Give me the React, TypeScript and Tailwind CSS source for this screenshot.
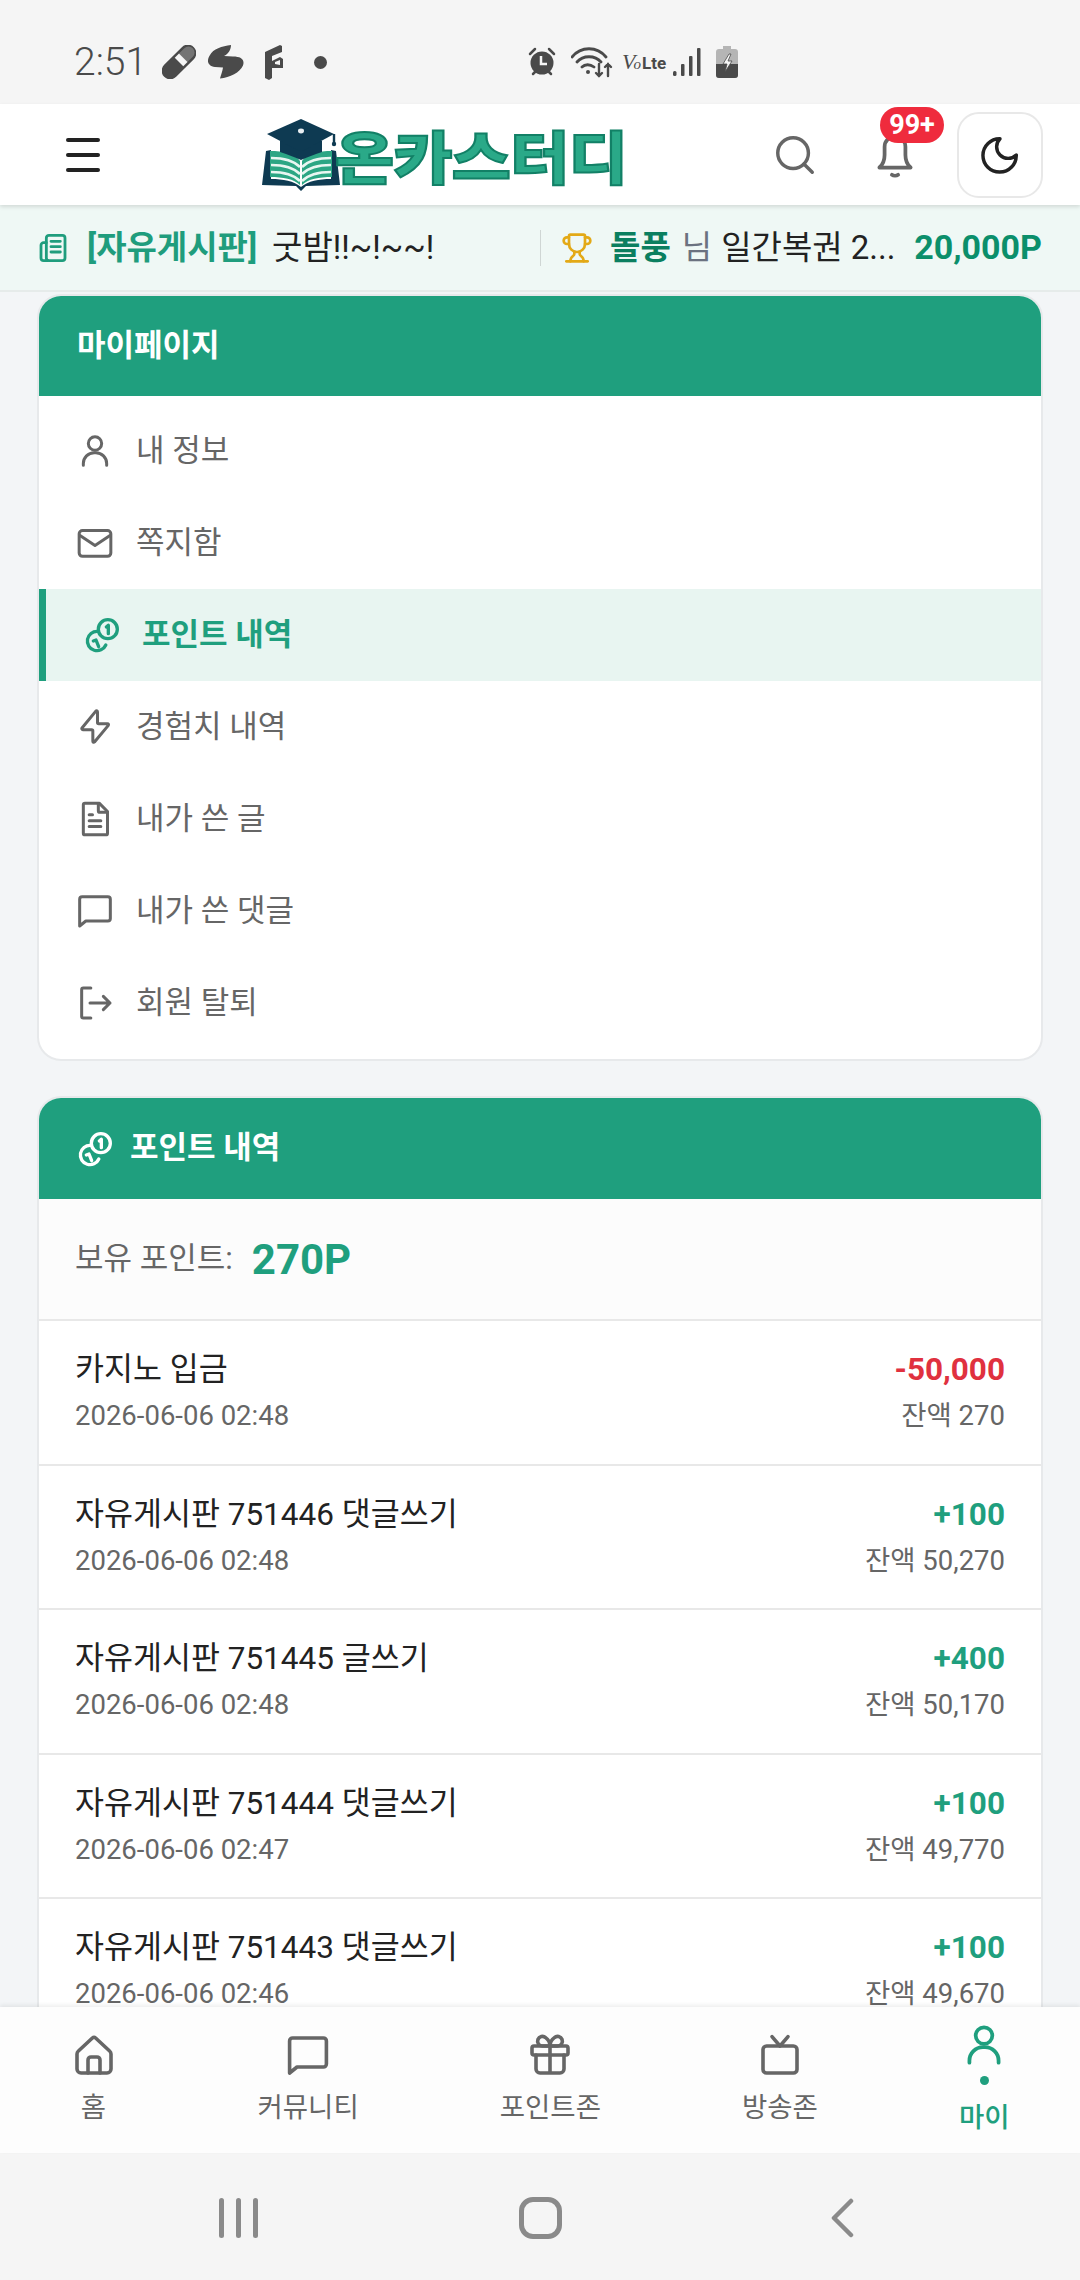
import React from "react";
import { Search, Trophy } from "lucide-react";

const Ico = ({ className, children, sw = 1.8 }: { className: string; children: React.ReactNode; sw?: number }) => (
  <svg viewBox="0 0 24 24" fill="none" stroke="currentColor" strokeWidth={sw} strokeLinecap="round" strokeLinejoin="round" className={className}>
    {children}
  </svg>
);

const UserIcon = ({ className }: { className: string }) => (
  <Ico className={className}>
    <circle cx="12" cy="7.5" r="4" />
    <path d="M5 20.5v-1a6.5 6.5 0 0 1 6.5-6.5h1a6.5 6.5 0 0 1 6.5 6.5v1" />
  </Ico>
);
const MailIcon = ({ className }: { className: string }) => (
  <Ico className={className}>
    <rect x="2.5" y="4.5" width="19" height="15.5" rx="2" />
    <path d="M3 7.5l9 6 9-6" />
  </Ico>
);
const CoinsIcon = ({ className }: { className: string }) => (
  <Ico className={className} sw={2}>
    <circle cx="15.5" cy="8.5" r="5.7" />
    <path d="M14.6 7.2l1.2-1v5" />
    <path d="M9.3 9.8a5.8 5.8 0 1 0 5 8.2" />
    <path d="M6.8 15.6l1.6-.6 1.6 4" />
  </Ico>
);
const BoltIcon = ({ className }: { className: string }) => (
  <Ico className={className}>
    <path d="M4.2 12.6l8.3-10.1c.4-.4 1-.1 1 .5v6.3c0 .4.3.7.7.7h5.3c.5 0 .8.6.5 1l-8.3 10c-.4.4-1 .2-1-.4v-6.3c0-.4-.3-.7-.7-.7H4.7c-.5 0-.8-.6-.5-1z" />
  </Ico>
);
const PageIcon = ({ className }: { className: string }) => (
  <Ico className={className}>
    <path d="M6 2.5h8.5l5 5v13a1 1 0 0 1-1 1H6a1 1 0 0 1-1-1v-17a1 1 0 0 1 1-1z" />
    <path d="M14 2.8V7a1 1 0 0 0 1 1h4.2" />
    <path d="M8.5 9.5h2M8.5 13h7M8.5 16.5h7" />
  </Ico>
);
const ChatIcon = ({ className }: { className: string }) => (
  <Ico className={className}>
    <path d="M2.8 21V5a1.5 1.5 0 0 1 1.5-1.5h15.4A1.5 1.5 0 0 1 21.2 5v11.5a1.5 1.5 0 0 1-1.5 1.5H6.5z" />
  </Ico>
);
const ExitIcon = ({ className }: { className: string }) => (
  <Ico className={className}>
    <path d="M9.5 3H5a1 1 0 0 0-1 1v16a1 1 0 0 0 1 1h4.5" />
    <path d="M9 12h12M17 8l4 4-4 4" />
  </Ico>
);
const HomeIcon = ({ className }: { className: string }) => (
  <Ico className={className}>
    <path d="M3.5 11.5a2 2 0 0 1 .7-1.5l7-6.5a1.2 1.2 0 0 1 1.6 0l7 6.5a2 2 0 0 1 .7 1.5V19a2 2 0 0 1-2 2h-13a2 2 0 0 1-2-2z" />
    <path d="M9 21v-6.5a1.5 1.5 0 0 1 1.5-1.5h3a1.5 1.5 0 0 1 1.5 1.5V21" />
  </Ico>
);
const GiftIcon = ({ className }: { className: string }) => (
  <Ico className={className}>
    <rect x="3" y="7.5" width="18" height="4.5" rx="1" />
    <path d="M5 12v7a2 2 0 0 0 2 2h10a2 2 0 0 0 2-2v-7M12 7.5V21" />
    <path d="M12 7.5H8.2a2.4 2.4 0 1 1 1.6-4.2c1.4 1 2.2 2.6 2.2 4.2zM12 7.5h3.8a2.4 2.4 0 1 0-1.6-4.2C12.8 4.3 12 5.9 12 7.5z" />
  </Ico>
);
const TvIcon = ({ className }: { className: string }) => (
  <Ico className={className}>
    <rect x="3.5" y="7.5" width="17" height="13.5" rx="1.8" />
    <path d="M8 2.8l4 4.7 4-4.7" />
  </Ico>
);

const menu = [
  { label: "내 정보", icon: UserIcon },
  { label: "쪽지함", icon: MailIcon },
  { label: "포인트 내역", icon: CoinsIcon, active: true },
  { label: "경험치 내역", icon: BoltIcon },
  { label: "내가 쓴 글", icon: PageIcon },
  { label: "내가 쓴 댓글", icon: ChatIcon },
  { label: "회원 탈퇴", icon: ExitIcon },
];

const history = [
  { title: "카지노 입금", date: "2026-06-06 02:48", amount: "-50,000", balance: "잔액 270", minus: true },
  { title: "자유게시판 751446 댓글쓰기", date: "2026-06-06 02:48", amount: "+100", balance: "잔액 50,270" },
  { title: "자유게시판 751445 글쓰기", date: "2026-06-06 02:48", amount: "+400", balance: "잔액 50,170" },
  { title: "자유게시판 751444 댓글쓰기", date: "2026-06-06 02:47", amount: "+100", balance: "잔액 49,770" },
  { title: "자유게시판 751443 댓글쓰기", date: "2026-06-06 02:46", amount: "+100", balance: "잔액 49,670" },
];

const StatusBar = () => (
  <div className="h-[104px] shrink-0 bg-[#f5f5f5] flex items-center pt-[20px] pl-[74px] text-[#4a4a4a]">
    <span className="text-[39px] leading-none font-light w-[88px]">2:51</span>
    <svg viewBox="0 0 34 34" className="w-[34px] h-[34px] fill-current">
      <g transform="rotate(-45 17 17)">
        <rect x="-4" y="8.5" width="42" height="17" rx="8.5" />
        <rect x="17" y="11" width="6" height="12" fill="#f5f5f5" />
        <path d="M23 11h7.5a6 6 0 0 1 0 12H23z" fill="#f5f5f5" opacity="0.25" />
      </g>
    </svg>
    <svg viewBox="0 0 38 36" className="w-[38px] h-[36px] ml-[11px] fill-current">
      <path d="M24 1C15 2 6 5 3 11-1 17 1 22 8 23l8 .5c-.5 4-2 7-3 11 10-1 20-6 23-13 2-6-2-9-10-9l-9-.5C21 10 24 6 24 1z" />
    </svg>
    <svg viewBox="0 0 20 36" className="w-[20px] h-[36px] ml-[19px] fill-current">
      <path d="M1 8l15-7 2 1v6L8 12v5l8-4 3 2v9L8 24v10l-3 2-4-2z" />
      <path d="M11 18l5-2v5l-5-1z" fill="#f5f5f5" />
    </svg>
    <span className="w-[13px] h-[13px] rounded-full bg-current ml-[30px]" />
    <svg viewBox="0 0 28 30" className="w-[28px] h-[30px] ml-[201px] fill-current">
      <circle cx="14" cy="16" r="11.5" />
      <path d="M2 7l5-5M26 7l-5-5M5 27l3-3M23 27l-3-3" stroke="currentColor" strokeWidth="2.5" strokeLinecap="round" />
      <path d="M13 9v8h6" fill="none" stroke="#f5f5f5" strokeWidth="2.5" />
    </svg>
    <svg viewBox="0 0 42 32" className="w-[42px] h-[32px] ml-[15px]" fill="none" stroke="currentColor" strokeWidth="2.8" strokeLinecap="round">
      <path d="M1 11C10 0 26 0 35 11M6 16c6-7 18-7 24 0M11 21c3-3 8-3 12 0" />
      <circle cx="17" cy="26" r="2" fill="currentColor" stroke="none" />
      <path d="M28 18v12M25 27l3 3 3-3M37 30V18M34 21l3-3 3 3" strokeWidth="2.4" />
    </svg>
    <span className="ml-[9px] w-[44px] flex items-baseline leading-none whitespace-nowrap">
      <span className="text-[22px] italic font-['Liberation_Serif',serif] tracking-[-2px]">V</span>
      <span className="text-[15px] italic font-['Liberation_Serif',serif]">o</span>
      <span className="text-[17px] font-bold font-['Roboto',sans-serif] ml-[1px]">Lte</span>
    </span>
    <svg viewBox="0 0 28 30" className="w-[28px] h-[30px] ml-[7px] fill-current">
      <rect x="0" y="24" width="3.5" height="5" rx="1.5" />
      <rect x="8" y="17" width="3.5" height="12" rx="1" />
      <rect x="16" y="9" width="3.5" height="20" rx="1" />
      <rect x="24" y="1" width="3.5" height="28" rx="1" />
    </svg>
    <svg viewBox="0 0 22 32" className="w-[22px] h-[32px] ml-[15px]">
      <path d="M7 0h8v3h4a3 3 0 0 1 3 3v23a3 3 0 0 1-3 3H3a3 3 0 0 1-3-3V6a3 3 0 0 1 3-3h4z" fill="#b5b5b5" />
      <path d="M0 18h22v11a3 3 0 0 1-3 3H3a3 3 0 0 1-3-3z" fill="#4a4a4a" />
      <path d="M13 8l-6 10h4l-2 8 7-11h-4l3-7z" fill="#f5f5f5" stroke="#4a4a4a" strokeWidth="0.8" />
    </svg>
  </div>
);

const Logo = () => (
  <div className="flex items-center">
    <svg viewBox="0 0 78 72" className="w-[78px] h-[72px] shrink-0">
      {/* book cover */}
      <path d="M0 66L4 32l5-1v29c12 0 23 2 30 8 7-6 18-8 30-8V31l5 1 4 34-34 1-5 5-5-5z" fill="#0e3a52" />
      {/* pages */}
      <path d="M8 32c13 0 25 2 30 10v24c-6-6-17-8-30-8z" fill="#2ca684" />
      <path d="M70 32c-13 0-25 2-30 10v24c6-6 17-8 30-8z" fill="#2ca684" />
      <path d="M9 39c12 0 23 3 29 9M9 46c12 0 23 3 29 9M9 53c12 0 23 3 29 9M69 39c-12 0-23 3-29 9M69 46c-12 0-23 3-29 9M69 53c-12 0-23 3-29 9" stroke="#e8f6f1" strokeWidth="2.6" fill="none" />
      {/* cap */}
      <path d="M18 22v11c7 2 14 5 21 8 7-3 14-6 21-8V22z" fill="#0e3a52" />
      <path d="M39 0l33 15-33 18L5 15z" fill="#0e3a52" />
      <ellipse cx="39" cy="12" rx="3" ry="2.4" fill="#e8eef2" />
      <path d="M72 15v9" stroke="#0e3a52" strokeWidth="2.4" />
      <circle cx="72" cy="25" r="2.2" fill="#0e3a52" />
    </svg>
    <span className="ml-[-5px] inline-block origin-left scale-x-[1.125] text-[57px] leading-none font-black tracking-[-0.5px] text-[#2aa988] font-['Noto_Sans_CJK_KR',sans-serif] [-webkit-text-stroke:2px_#128066] whitespace-nowrap">
      온카스터디
    </span>
  </div>
);

const TopBar = () => (
  <div className="relative z-10 h-[101px] shrink-0 bg-white flex items-center justify-between pl-[66px] pr-[37px] shadow-[0_2px_4px_rgba(0,0,0,0.12)]">
    <div className="flex items-center">
      <div className="w-[34px] flex flex-col gap-[11px]">
        <div className="h-[4px] bg-[#222] rounded-full" />
        <div className="h-[4px] bg-[#222] rounded-full" />
        <div className="h-[4px] bg-[#222] rounded-full" />
      </div>
      <div className="ml-[162px]">
        <Logo />
      </div>
    </div>
    <div className="flex items-center">
      <Search className="w-[46px] h-[46px] text-[#666]" strokeWidth={1.8} />
      <div className="relative ml-[52px] mr-[37px] w-[50px] h-[50px] text-[#666]">
        <Ico className="w-[50px] h-[50px]">
          <path d="M4.5 18c1.8-1.5 2.5-3.5 2.5-6V8a5 5 0 0 1 10 0v4c0 2.5.7 4.5 2.5 6z" />
          <path d="M10.5 21.5c.8.6 2.2.6 3 0" />
        </Ico>
        <span className="absolute left-[10px] top-[-23px] w-[64px] h-[36px] rounded-full bg-[#ef2b3d] text-white text-[27px] leading-[36px] font-bold text-center font-['Roboto',sans-serif]">
          99+
        </span>
      </div>
      <div className="w-[86px] h-[86px] rounded-[22px] border-2 border-[#e8e8e8] flex items-center justify-center text-[#222]">
        <Ico className="w-[46px] h-[46px]">
          <path d="M12 3.5a6 6 0 0 0 8.5 8.5 8.7 8.7 0 1 1-8.5-8.5z" />
        </Ico>
      </div>
    </div>
  </div>
);

const Ticker = () => (
  <div className="h-[87px] shrink-0 bg-[#eff8f5] border-b-2 border-[#e6ebea] flex items-center pl-[37px] pr-[38px] text-[33px] whitespace-nowrap">
    <Ico className="w-[32px] h-[36px] text-[#1f9d7d]" sw={2.1}>
      <rect x="7" y="2.5" width="14" height="19" rx="2" />
      <path d="M7 8H5a2 2 0 0 0-2 2v9.5a2 2 0 0 0 2 2h3M10.5 7h7M10.5 11h7M10.5 15h7" />
    </Ico>
    <span className="ml-[18px] font-bold text-[#1f9d7d]">[자유게시판]</span>
    <span className="ml-[15px] text-[#222] w-[268px]">굿밤!!~!~~!</span>
    <div className="w-[1px] h-[36px] bg-[#cfd6d4]" />
    <Trophy className="ml-[20px] w-[32px] h-[34px] text-[#e3a916]" strokeWidth={2} />
    <span className="ml-[17px] font-bold text-[#0b7f60]">돌풍</span>
    <span className="ml-[11px] text-[#6b7280]">님</span>
    <span className="ml-[9px] text-[#222]">일간복권 2...</span>
    <span className="ml-auto font-bold text-[#0b8f6b] text-[34px]">20,000P</span>
  </div>
);

const MyMenu = () => (
  <div className="shrink-0 rounded-[24px] border-2 border-[#e7e9eb] bg-white overflow-hidden">
    <div className="h-[100px] bg-[#1f9f7e] flex items-center pl-[38px] text-white text-[31px] font-bold">마이페이지</div>
    <div className="pt-[9px] pb-[10px]">
      {menu.map((m) => {
        const Icon = m.icon;
        return (
          <div
            key={m.label}
            className={
              m.active
                ? "h-[92px] flex items-center pl-[36px] border-l-[7px] border-[#1f9f7e] bg-[#e8f5f1] text-[#1f9f7e] font-bold"
                : "h-[92px] flex items-center pl-[36px] text-[#666]"
            }
          >
            <Icon className="w-[40px] h-[40px] shrink-0" />
            <span className={m.active ? "ml-[20px] text-[31px]" : "ml-[21px] text-[31px]"}>{m.label}</span>
          </div>
        );
      })}
    </div>
  </div>
);

const PointHistory = () => (
  <div className="shrink-0 rounded-t-[24px] border-x-2 border-t-2 border-[#e7e9eb] bg-white overflow-hidden">
    <div className="h-[101px] bg-[#1f9f7e] flex items-center pl-[36px] text-white text-[31px] font-bold">
      <CoinsIcon className="w-[40px] h-[40px]" />
      <span className="ml-[15px]">포인트 내역</span>
    </div>
    <div className="h-[122px] bg-[#fcfcfc] border-b-2 border-[#e8e8e8] flex items-center pl-[36px]">
      <span className="text-[31px] text-[#666]">보유 포인트:</span>
      <span className="ml-[19px] text-[42px] font-bold text-[#1f9f7e]">270P</span>
    </div>
    {history.map((h) => (
      <div key={h.title} className="h-[144.5px] shrink-0 border-b-2 border-[#e8e8e8] flex items-center justify-between px-[36px]">
        <div>
          <div className="text-[31.5px] leading-[44px] text-[#222]">{h.title}</div>
          <div className="text-[27.5px] leading-[40px] mt-[4px] text-[#666]">{h.date}</div>
        </div>
        <div className="text-right">
          <div className={h.minus ? "text-[31.5px] leading-[44px] font-bold text-[#e0313f]" : "text-[31.5px] leading-[44px] font-bold text-[#1f9f7e]"}>{h.amount}</div>
          <div className="text-[27.5px] leading-[40px] mt-[4px] text-[#666]">{h.balance}</div>
        </div>
      </div>
    ))}
  </div>
);

const BottomNav = () => (
  <div className="relative z-10 h-[146px] shrink-0 bg-[#fdfdfd] flex items-center justify-around pl-[3px] pb-[3px] shadow-[0_-2px_4px_rgba(0,0,0,0.07)] text-[#666] text-[27.5px] leading-[38px]">
    <div className="w-[40px] mr-[3px] flex flex-col items-center">
      <HomeIcon className="w-[48px] h-[48px] shrink-0" />
      <span className="mt-[10px] whitespace-nowrap">홈</span>
    </div>
    <div className="flex flex-col items-center">
      <ChatIcon className="w-[48px] h-[48px]" />
      <span className="mt-[10px] whitespace-nowrap">커뮤니티</span>
    </div>
    <div className="flex flex-col items-center">
      <GiftIcon className="w-[48px] h-[48px]" />
      <span className="mt-[10px] whitespace-nowrap">포인트존</span>
    </div>
    <div className="flex flex-col items-center">
      <TvIcon className="w-[48px] h-[48px]" />
      <span className="mt-[10px] whitespace-nowrap">방송존</span>
    </div>
    <div className="flex flex-col items-center text-[#1f9f7e] font-medium">
      <UserIcon className="w-[50px] h-[50px]" />
      <span className="w-[9px] h-[9px] rounded-full bg-[#1f9f7e] mt-[6px]" />
      <span className="mt-[14px] whitespace-nowrap">마이</span>
    </div>
  </div>
);

const SystemNav = () => (
  <div className="h-[127px] shrink-0 bg-[#f5f5f5] flex items-center justify-center pt-[2px]">
    <div className="grid grid-cols-[302px_302px_302px] justify-items-center items-center text-[#8a8a8a]">
      <div className="flex gap-[12px]">
        <div className="w-[5px] h-[40px] rounded-full bg-current" />
        <div className="w-[5px] h-[40px] rounded-full bg-current" />
        <div className="w-[5px] h-[40px] rounded-full bg-current" />
      </div>
      <div className="w-[43px] h-[42px] rounded-[14px] border-[5px] border-current" />
      <svg viewBox="0 0 24 40" className="w-[24px] h-[40px]" fill="none" stroke="currentColor" strokeWidth="4.5" strokeLinecap="round" strokeLinejoin="round">
        <path d="M21 3L4 20l17 17" />
      </svg>
    </div>
  </div>
);

export default function App() {
  return (
    <div className="w-[1080px] h-[2280px] flex flex-col overflow-hidden bg-[#f3f5f7] font-['Roboto','Noto_Sans_CJK_KR',sans-serif]">
      <StatusBar />
      <TopBar />
      <Ticker />
      <main className="flex-1 min-h-0 overflow-hidden pt-[2px] px-[37px] flex flex-col gap-[35px]">
        <MyMenu />
        <PointHistory />
      </main>
      <BottomNav />
      <SystemNav />
    </div>
  );
}
